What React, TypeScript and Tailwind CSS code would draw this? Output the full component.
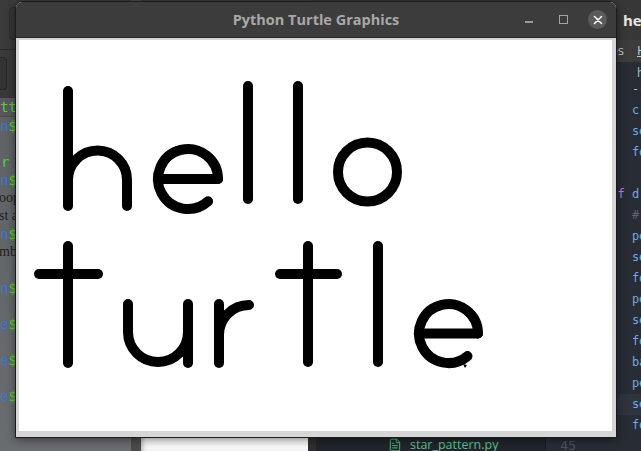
import React from "react";
import { FileText } from "lucide-react";

type Row =
  | { kind: "blank" }
  | { kind: "prompt"; path: string }
  | { kind: "green"; text: string }
  | { kind: "serif"; text: string };

const termRows: Row[] = [
  { kind: "prompt", path: "~/python" },
  { kind: "blank" },
  { kind: "green", text: "hello_turtle.py  star_pattern.py  spiral" },
  { kind: "prompt", path: "~/python" },
  { kind: "serif", text: "oop" },
  { kind: "serif", text: "st a" },
  { kind: "prompt", path: "~/python" },
  { kind: "serif", text: "mb" },
  { kind: "blank" },
  { kind: "prompt", path: "~/python" },
  { kind: "blank" },
  { kind: "prompt", path: "~/turtle" },
  { kind: "blank" },
  { kind: "prompt", path: "~/turtle" },
  { kind: "blank" },
  { kind: "prompt", path: "~/turtle" },
  { kind: "blank" },
];

const BLUE = "text-[#61afef]";

const codeRows: { n: number; code: React.ReactNode; hl?: boolean }[] = [
  { n: 28, code: <span className="text-[#abb2bf]">{"    ---"}</span> },
  { n: 29, code: <span className={BLUE}>{"    c.circle(30, 180)"}</span> },
  { n: 30, code: <span className={BLUE}>{"    setheading(0)"}</span> },
  { n: 31, code: <span className={BLUE}>{"    forward(50)"}</span> },
  { n: 32, code: <span>{""}</span> },
  {
    n: 33,
    code: (
      <>
        <span className="text-[#c678dd]">def</span>
        <span className={BLUE}>{" draw_t(x, y):"}</span>
      </>
    ),
  },
  { n: 34, code: <span className="text-[#5c6370]">{"    # letter t"}</span> },
  { n: 35, code: <span className={BLUE}>{"    penup()"}</span> },
  { n: 36, code: <span className={BLUE}>{"    setpos(x, y)"}</span> },
  { n: 37, code: <span className={BLUE}>{"    forward(60)"}</span> },
  { n: 38, code: <span className={BLUE}>{"    pendown()"}</span> },
  { n: 39, code: <span className={BLUE}>{"    setheading(90)"}</span> },
  { n: 40, code: <span className={BLUE}>{"    forward(120)"}</span> },
  { n: 41, code: <span className={BLUE}>{"    backward(60)"}</span> },
  { n: 42, code: <span className={BLUE}>{"    penup()"}</span> },
  { n: 43, code: <span className={BLUE}>{"    setheading(180)"}</span>, hl: true },
  { n: 44, code: <span className={BLUE}>{"    forward(30)"}</span> },
  { n: 45, code: <span>{""}</span> },
];

const files = [
  ".git",
  "__pycache__",
  "assets",
  "circle.py",
  "clock.py",
  "colors.py",
  "draw_letters.py",
  "fractal_tree.py",
  "hello_turtle.py",
  "house.py",
  "koch_curve.py",
  "maze.py",
  "rainbow.py",
  "snake.py",
  "snowflake.py",
  "spiral.py",
  "square.py",
  "star_pattern.py",
];

function Terminal() {
  return (
    <div className="w-[131px] shrink-0 flex flex-col overflow-hidden bg-gradient-to-b from-[#5a5e60] to-[#6a6d6f] font-['DejaVu_Sans_Mono',monospace] text-[14px]">
      <div className="h-[50px] shrink-0 bg-[#3b3b3b] border-b border-[#2a2a2a] pt-[7px] pl-[9px]">
        <div className="h-[33px] w-[80px] rounded-[4px] border border-[#2a2a2a] bg-[#363636]" />
      </div>
      <div className="h-[48px] shrink-0 bg-[#393939] pt-[7px]">
        <div className="h-[33px] w-[7px] rounded-r-[4px] border border-l-0 border-[#262626] bg-[#333333]" />
      </div>
      <div className="h-[19px] shrink-0 border-b border-[#4a4d50] bg-[#56595b]">
        <div className="flex w-[17px] justify-end whitespace-nowrap leading-[18px] text-[#53d12a]">
          python3 pytt
        </div>
      </div>
      {termRows.map((r, i) => (
        <div key={i} className="h-[18px] shrink-0 leading-[18px] whitespace-nowrap">
          {r.kind === "prompt" && (
            <div className="flex w-[17px] justify-end">
              <span className="text-[#53d12a]">user@ubuntu:</span>
              <span className="text-[#3b74d4]">{r.path}</span>
              <span className="text-[#53d12a]">$</span>
            </div>
          )}
          {r.kind === "green" && (
            <div className="pl-[1px] text-[#53d12a]">{"r" + " " + r.text}</div>
          )}
          {r.kind === "serif" && (
            <div className="font-['Liberation_Serif',serif] text-[14px] text-[#1e1e1e] -ml-[1px]">{r.text}</div>
          )}
        </div>
      ))}
    </div>
  );
}

function Editor() {
  return (
    <div className="flex-1 min-w-0 flex flex-col overflow-hidden bg-[#282c34] font-['Open_Sans',sans-serif]">
      <div className="h-[40px] shrink-0 bg-[#373737] pl-[315px] flex items-center whitespace-nowrap text-[15px] font-bold text-[#e6e6e6]">
        hello_turtle.py — ~/python — Atom
      </div>
      <div className="h-[22px] shrink-0 bg-[#3c3c3c] flex items-center whitespace-nowrap text-[13px] text-[#c8c8c8]">
        <div className="w-[316px] shrink-0 text-right">File&nbsp;&nbsp;Edit&nbsp;&nbsp;View&nbsp;&nbsp;Selection&nbsp;&nbsp;Find&nbsp;&nbsp;Packages</div>
        <div className="ml-[13px] shrink-0">
          <span className="underline">H</span>elp
        </div>
      </div>
      <div className="flex-1 flex min-h-0">
        <div className="w-[8px] shrink-0 bg-[#2f2f2f]" />
        <div className="w-[230px] shrink-0 bg-[#21252b] border-r border-[#181a1f] pt-[15.5px] text-[12.5px]">
          {files.map((f) => (
            <div
              key={f}
              className={
                "h-[21px] flex items-center gap-[8px] pl-[72px] whitespace-nowrap " +
                (f === "star_pattern.py" ? "text-[#58c28b]" : "text-[#9da5b4]")
              }
            >
              <FileText size={14} strokeWidth={1.6} className="shrink-0" />
              <span>{f}</span>
            </div>
          ))}
        </div>
        <div className="flex-1 min-w-0 flex flex-col font-['DejaVu_Sans_Mono',monospace] text-[12px]">
          <div className="h-[16.5px] shrink-0 pl-[91px] pt-[5px] leading-[11px] font-['Open_Sans',sans-serif] text-[12px] text-[#b8bcc4] whitespace-nowrap">
            hello_turtle.py
          </div>
          {codeRows.map((r) => (
            <div
              key={r.n}
              className={"h-[21px] shrink-0 flex items-center whitespace-pre " + (r.hl ? "bg-[#2f333d]" : "")}
            >
              <div className="w-[44px] shrink-0 text-right pr-[14px] text-[13px] text-[#4b5263]">{r.n}</div>
              <div className="pl-[13px] text-[12px]">{r.code}</div>
            </div>
          ))}
        </div>
      </div>
    </div>
  );
}

function TurtleDrawing() {
  return (
    <svg width="593" height="391" viewBox="19 41 593 391" className="block">
      <g fill="none" stroke="#000" strokeWidth="10" strokeLinecap="round" strokeLinejoin="round">
        <path d="M68 92 V207" />
        <path d="M68 181 A29.5 29.5 0 0 1 127 181 V207" />
        <path d="M158 180 H218" />
        <path d="M218 180 A30 30 0 1 0 208.1 202.3" />
        <path d="M248 87 V200" />
        <path d="M298 87 V200" />
        <circle cx="367.5" cy="173" r="29.5" />
        <path d="M68 247 V364" />
        <path d="M39 275 H98" />
        <path d="M128 305 V333 A30 30 0 0 0 188 333" />
        <path d="M188 305 V364" />
        <path d="M219 305 V364" />
        <path d="M219 336 A30 30 0 0 1 249 306" />
        <path d="M308 247 V363" />
        <path d="M280 275 H337" />
        <path d="M378 247 V363" />
        <path d="M419 334.5 H478" />
        <path d="M478 334.5 A29.5 29.5 0 1 0 467.5 357.1" />
      </g>
      <polygon points="463,365 467,366 465,369" fill="#000" />
    </svg>
  );
}

function TurtleWindow() {
  return (
    <div className="absolute left-[15px] top-[1px] w-[602px] h-[437px] flex flex-col rounded-t-[7px] border border-[#1c1c1c] bg-[#d8d8d8] shadow-[0_2px_8px_rgba(0,0,0,0.45)]">
      <div className="h-[36px] shrink-0 grid grid-cols-[1fr_auto_1fr] items-center bg-[#3c3c3c] rounded-t-[6px] border-b border-[#2a2a2a]">
        <div />
        <div className="font-['Open_Sans',sans-serif] font-bold text-[14.5px] text-[#a8a8a8] whitespace-nowrap">
          Python Turtle Graphics
        </div>
        <div className="flex items-center justify-end pr-[9px]">
          <div className="w-[8px] h-[1.5px] mt-[5px] bg-[#9c9c9c]" />
          <div className="ml-[26px] w-[9px] h-[9px] border border-[#a4a4a4]" />
          <div className="ml-[20px] w-[19px] h-[19px] rounded-full bg-[#5b5b5b] flex items-center justify-center">
            <svg width="10" height="10" viewBox="0 0 10 10">
              <path d="M1.5 1.5 L8.5 8.5 M8.5 1.5 L1.5 8.5" stroke="#ffffff" strokeWidth="1.6" strokeLinecap="round" />
            </svg>
          </div>
        </div>
      </div>
      <div className="flex-1 pl-[3px] pt-[2px] pr-[4px] pb-[5px] bg-[#d6d6d6]">
        <div className="bg-white w-[593px] h-[391px] overflow-hidden">
          <TurtleDrawing />
        </div>
      </div>
    </div>
  );
}

export default function App() {
  return (
    <div className="relative w-[641px] h-[451px] overflow-hidden bg-[#2e2e2e]">
      <div className="flex h-full">
        <Terminal />
        <div className="w-[10px] shrink-0 bg-[#4b4b4b]" />
        <div className="w-[167px] shrink-0 flex flex-col bg-[#3b3b3b]">
          <div className="mt-auto h-[70px] bg-[#f8f8f8] shadow-[inset_4px_0_4px_-2px_rgba(0,0,0,0.25)]" />
        </div>
        <Editor />
      </div>
      <TurtleWindow />
    </div>
  );
}
